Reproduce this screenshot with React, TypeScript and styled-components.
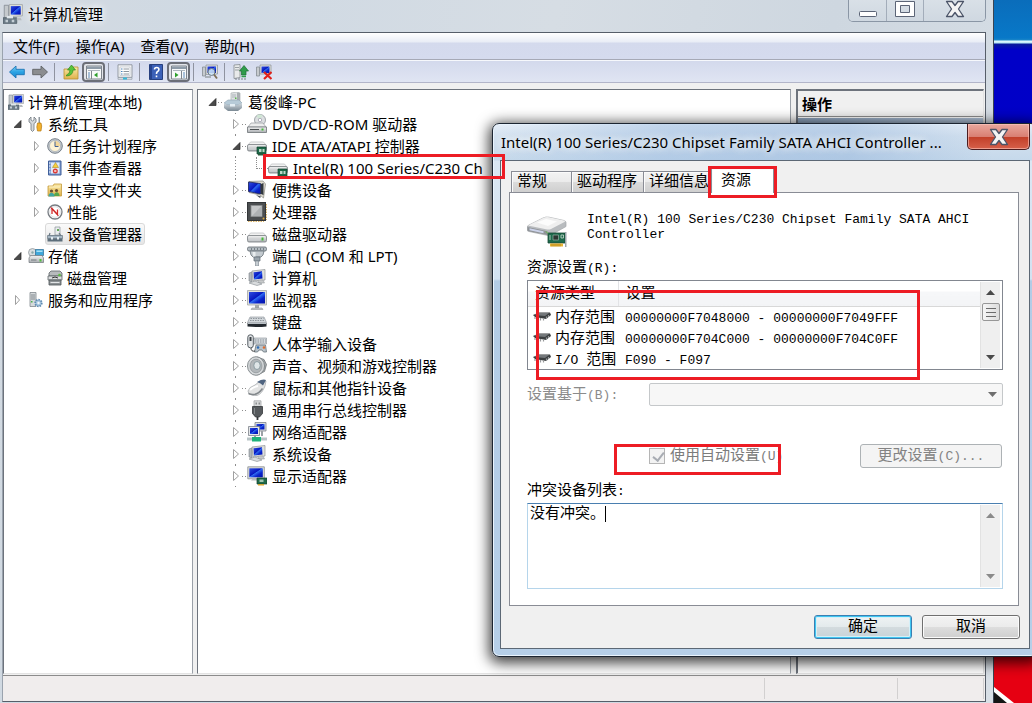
import React from "react";
import styled, { createGlobalStyle, css } from "styled-components";

const uiFont = `"Noto Sans", "Noto Sans CJK SC", sans-serif`;
const songFont = `"Liberation Mono", "Noto Sans CJK SC", monospace`;

const GlobalStyle = createGlobalStyle`
  * { box-sizing: border-box; }
  body { margin: 0; background: #0000c6; font-family: ${uiFont}; font-size: 15px; color: #000; }
  button, input, select, textarea { font: inherit; color: inherit; margin: 0; }
  ul { list-style: none; margin: 0; padding: 0; }
  svg { display: block; flex: none; }
`;

/* ---------- desktop ---------- */

const Desktop = styled.div`
  position: relative;
  overflow: hidden;
  min-height: 100vh;
  display: flex;
  background: linear-gradient(#0a6dbb 0, #0878c8 38px, #1a86c8 40px, #e8fbff 41px, #b5e6f5 43px, #0a1a9a 44px, #0000c8 50px, #0000c4 560px, #e60012 561px);
`;

const Wallpaper = styled.svg`
  position: absolute;
  right: 0;
  bottom: 0;
`;

/* ---------- main window ---------- */

const MainWindow = styled.section`
  flex: 1;
  min-width: 0;
  margin-right: 38px;
  padding: 0 7px 1px 2px;
  display: flex;
  flex-direction: column;
  position: relative;
  background: linear-gradient(100deg, #d3dae1 0, #cfd9e3 20%, #d6dde4 50%, #ced7e0 75%, #d8dfe6 100%);
  border-right: 1px solid #3b4452;
`;

const TitleBar = styled.header`
  height: 32px;
  display: flex;
  align-items: flex-start;
  gap: 5px;
  padding: 4px 0 0 1px;
`;

const WindowTitle = styled.h1`
  margin: 0;
  font-size: 15px;
  font-weight: 400;
  line-height: 20px;
  text-shadow: 0 0 6px #fff, 0 0 10px #fff;
`;

const CaptionButtons = styled.div`
  display: flex;
  margin: -4px 0 0 auto;
  height: 22px;
  border: 1px solid #8a96a5;
  border-top: 0;
  border-radius: 0 0 5px 5px;
  overflow: hidden;
`;

const CaptionButton = styled.button<{ $wide?: boolean }>`
  width: ${(p) => (p.$wide ? 62 : 37)}px;
  border: 0;
  border-left: 1px solid #a3adba;
  padding: 0;
  display: flex;
  align-items: flex-start;
  justify-content: center;
  background: linear-gradient(#d9e0e7, #cfd8e1);
  &:first-child { border-left: 0; }
`;

const Client = styled.div`
  flex: 1;
  display: flex;
  flex-direction: column;
  border: 1px solid #565e69;
  border-left-color: #9aa3ae;
  background: #f0f0f0;
`;

const MenuBar = styled.nav`
  height: 27px;
  display: flex;
  padding-left: 2px;
  border-bottom: 1px solid #a6a9b6;
  background: linear-gradient(#fff 0, #e9edf6 9px, #d4daed 10px, #d5dbee 100%);
`;

const MenuItem = styled.button`
  border: 0;
  background: none;
  padding: 0 8px;
  line-height: 24px;
`;

const Toolbar = styled.div`
  height: 23px;
  display: flex;
  align-items: center;
  padding-left: 2px;
  border-top: 1px solid #f6f8fc;
  border-bottom: 1px solid #b2b5c9;
  background: linear-gradient(#d3d9ec, #e0e5f3);
`;

const ToolButton = styled.button<{ $on?: boolean }>`
  width: 23px;
  height: 20px;
  padding: 0;
  display: flex;
  align-items: center;
  justify-content: center;
  border: 1px solid transparent;
  border-radius: 4px;
  background: none;
  ${(p) =>
    p.$on &&
    css`
      border: 2px solid #6c6f78;
      background: #e3e5ea;
    `}
`;

const ToolSeparator = styled.span`
  width: 1px;
  height: 18px;
  margin: 0 4px 0 3px;
  background: #8f93a0;
`;

const Panes = styled.div`
  flex: 1;
  display: flex;
  gap: 4px;
  padding: 6px 1px 1px 0;
`;

const Pane = styled.div<{ $width?: number }>`
  ${(p) => (p.$width ? `flex: 0 0 ${p.$width}px;` : "flex: 1;")}
  min-width: 0;
  padding-top: 1px;
  background: #fff;
  border: 1px solid #6d737c;
  border-bottom-color: #e3e3e3;
  border-right-color: #9aa0a8;
`;

const ActionsPane = styled(Pane)`
  padding: 0;
  margin-left: 1px;
  border: 2px solid #6d737c;
  border-right: 1px solid #e3e3e3;
  border-bottom: 1px solid #e3e3e3;
`;

const ActionsHead = styled.h2`
  margin: 0;
  height: 26px;
  padding-left: 4px;
  font-size: 15px;
  font-weight: 700;
  line-height: 26px;
  background: #f0f0f0;
  border-bottom: 1px solid #8e8e8e;
`;

const ActionsGroup = styled.div`
  height: 26px;
  margin-top: 1px;
  background: linear-gradient(90deg, #8fa5bf, #b4c6dc);
`;

const StatusBar = styled.footer`
  height: 26px;
  display: flex;
  justify-content: flex-end;
  padding-right: 1px;
  border-top: 1px solid #8c8c8c;
  background: #f0eded;
`;

const StatusCell = styled.span<{ $width: number }>`
  width: ${(p) => p.$width}px;
  margin: 2px 0;
  border-left: 1px solid #d2d0d0;
  &:last-child { border-right: 1px solid #d2d0d0; }
`;

/* ---------- trees ---------- */

const NavRow = styled.li<{ $level: number }>`
  height: 22px;
  display: flex;
  align-items: center;
  padding-left: ${(p) => [2, 8, 27][p.$level]}px;
`;

const NavTwisty = styled.span`
  width: 14px;
  padding-left: 2px;
`;

const NavBody = styled.span<{ $selected?: boolean }>`
  height: 22px;
  display: flex;
  align-items: center;
  gap: 4px;
  padding: 0 2px 0 1px;
  white-space: nowrap;
  line-height: 20px;
  border: 1px solid transparent;
  border-radius: 3px;
  ${(p) =>
    p.$selected &&
    css`
      border-color: #d9d9d9;
      background: linear-gradient(#fafafa, #e6e6e6);
    `}
`;

const dotsDown = css`
  background-image: repeating-linear-gradient(#8c8c8c 0 1px, transparent 1px 3px);
`;

const DeviceRow = styled.li<{ $root?: boolean }>`
  height: 22px;
  display: flex;
  align-items: center;
  padding-left: ${(p) => (p.$root ? 8 : 32)}px;
`;

const DeviceTwisty = styled.span<{ $line?: boolean }>`
  width: 12px;
  height: 22px;
  display: flex;
  align-items: center;
  padding: 4px 0 4px 2px;
  ${(p) => p.$line && dotsDown}
  background-size: 1px 100%;
  background-position: 5px 0;
  background-repeat: no-repeat;
  svg { background: #fff; height: 18px; }
`;

const Dots = styled.span`
  width: 5px;
  height: 1px;
  background: repeating-linear-gradient(90deg, #8c8c8c 0 1px, transparent 1px 3px);
`;

const Elbow = styled.span`
  width: 12px;
  height: 12px;
  margin: 0 0 10px 14px;
  border-left: 1px dotted #8c8c8c;
  border-bottom: 1px dotted #8c8c8c;
`;

const DeviceLabel = styled.span`
  margin-left: 5px;
  white-space: nowrap;
  line-height: 20px;
`;

/* ---------- dialog ---------- */

const Dialog = styled.section`
  position: absolute;
  top: 123px;
  left: 492px;
  right: -6px;
  padding: 0 7px 7px;
  border: 1px solid #1c2531;
  border-radius: 7px;
  background: linear-gradient(#e6eef7 0, #d3e1ef 12px, #c6d9eb 36px, #dbe7f3 37px, #d3e2f1 155px, #b3cce6 157px, #b6cfe8 100%);
  box-shadow: inset 0 0 0 1px #eaf4fd, 0 3px 14px 3px rgba(0, 0, 0, 0.75);
`;

const DialogTitleBar = styled.header`
  height: 36px;
  display: flex;
  justify-content: space-between;
  margin: 0 -5px 0 0;
  background: linear-gradient(90deg, transparent, rgba(160, 190, 225, 0.5) 30%, rgba(150, 182, 220, 0.5) 65%, transparent 92%);
`;

const DialogTitle = styled.h2`
  margin: 0;
  padding-left: 1px;
  font-size: 15px;
  font-weight: 400;
  line-height: 37px;
  white-space: nowrap;
  text-shadow: 0 0 8px #fff, 0 0 8px #fff;
`;

const DialogClose = styled.button`
  width: 63px;
  height: 26px;
  margin: 0 5px 0 0;
  padding: 0;
  display: flex;
  align-items: center;
  justify-content: center;
  border: 1px solid #4b1d20;
  border-top: 0;
  border-radius: 0 0 5px 5px;
  box-shadow: inset 0 0 0 1px rgba(255, 200, 190, 0.6);
  background: linear-gradient(#e9a89e 0, #d97f73 50%, #c13e28 51%, #d6604a 100%);
`;

const DialogBody = styled.div`
  padding: 7px 10px 9px 8px;
  border: 1px solid #5c6875;
  background: #f0f0f0;
  font-family: ${songFont};
`;

const TabStrip = styled.div`
  height: 25px;
  display: flex;
  align-items: flex-end;
  padding-left: 2px;
`;

const Tab = styled.button<{ $width: number; $active?: boolean }>`
  width: ${(p) => p.$width}px;
  height: 22px;
  padding: 1px 0 0 5px;
  text-align: left;
  white-space: nowrap;
  line-height: 20px;
  border: 1px solid #898c95;
  border-right-width: 0;
  background: linear-gradient(#f3f3f3 0, #ebebeb 50%, #dcdcdc 51%, #cfcfcf 100%);
  box-shadow: inset 1px 1px 0 #fbfbfb;
  ${(p) =>
    p.$active &&
    css`
      height: 25px;
      padding-left: 9px;
      line-height: 23px;
      border-right-width: 1px;
      border-bottom: 0;
      background: #fff;
      position: relative;
    `}
`;

const TabPage = styled.div`
  margin-top: -1px;
  padding: 19px 15px 16px 17px;
  border: 1px solid #898c95;
  background: #fff;
`;

const Latin = styled.span`
  font-size: 13px;
`;

const DeviceSummary = styled.div`
  height: 36px;
  display: flex;
  gap: 20px;
`;

const DeviceName = styled.p`
  margin: 0;
  font-size: 13px;
  line-height: 15px;
`;

const FieldLabel = styled.label<{ $space: number }>`
  display: block;
  margin: ${(p) => p.$space}px 0 1px;
  line-height: 20px;
`;

const ListBox = styled.div`
  height: 90px;
  display: flex;
  border: 1px solid #828790;
  background: #fff;
`;

const ListView = styled.div`
  flex: 1;
  overflow: hidden;
`;

const ListTable = styled.table`
  width: 100%;
  border-collapse: collapse;
  table-layout: fixed;
  th, td { padding: 0; text-align: left; font-weight: 400; white-space: nowrap; }
  th {
    height: 25px;
    padding: 4px 0 0 7px;
    line-height: 20px;
    background: linear-gradient(#fff 0, #fff 10px, #f6f7f9 11px, #f3f4f6 100%);
    border-bottom: 1px solid #d8d8d8;
  }
  th:first-child { width: 90px; border-right: 1px solid #e2e3e6; }
  td { height: 21px; line-height: 19px; padding: 2px 0 0 7px; }
  td:first-child { padding-left: 5px; }
`;

const TypeCell = styled.span`
  display: flex;
  align-items: center;
  gap: 4px;
`;

const ScrollTrack = styled.div`
  width: 20px;
  margin: 1px 2px 1px 0;
  display: flex;
  flex-direction: column;
  align-items: center;
  background: #efefef;
  border-left: 1px solid #e2e2e2;
`;

const ScrollArrow = styled.span`
  height: 21px;
  display: flex;
  align-items: center;
`;

const ScrollThumb = styled.span`
  width: 18px;
  height: 18px;
  display: flex;
  align-items: center;
  justify-content: center;
  border: 1px solid #979797;
  border-radius: 2px;
  background: linear-gradient(90deg, #f6f6f6, #dcdcdc);
`;

const ScrollSpace = styled.span`
  flex: 1;
`;

const BasedOnRow = styled.div`
  height: 23px;
  display: flex;
  margin-top: 13px;
  color: #8b8b8b;
  label { width: 122px; line-height: 26px; }
`;

const SelectWrap = styled.div`
  flex: 1;
  position: relative;
  svg { position: absolute; right: 6px; top: 9px; }
`;

const Select = styled.select`
  width: 100%;
  height: 23px;
  appearance: none;
  border: 1px solid #adb2b5;
  border-radius: 2px;
  background: #f4f4f4;
  display: block;
`;

const AutoRow = styled.div`
  display: flex;
  align-items: center;
  justify-content: space-between;
  height: 24px;
  margin-top: 38px;
  padding: 0 1px 0 122px;
`;

const CheckLabel = styled.label`
  display: flex;
  align-items: center;
  gap: 5px;
  white-space: nowrap;
  line-height: 20px;
  color: #7c7c7c;
  span { padding-top: 2px; }
`;

const CheckBox = styled.input`
  appearance: none;
  flex: none;
  width: 16px;
  height: 16px;
  border: 1px solid #b5b5b5;
  background: #f3f3f3;
  position: relative;
  &:checked::after {
    content: "";
    position: absolute;
    left: 5px;
    top: 1px;
    width: 5px;
    height: 9px;
    border: solid #a8acb3;
    border-width: 0 2px 2px 0;
    transform: rotate(38deg);
  }
`;

const ChangeButton = styled.button`
  width: 142px;
  height: 24px;
  padding: 2px 0 0;
  line-height: 20px;
  border: 1px solid #adb2b5;
  border-radius: 3px;
  background: #f4f4f4;
  color: #838383;
`;

const ConflictBox = styled.div`
  position: relative;
  height: 86px;
  display: flex;
  border: 1px solid #b5d5eb;
  border-top-color: #4a7fb0;
  background: #fff;
`;

const ConflictText = styled.textarea`
  flex: 1;
  padding: 1px 3px 0 2px;
  border: 0;
  outline: 0;
  resize: none;
  background: none;
  line-height: 19px;
`;

const Caret = styled.span`
  position: absolute;
  left: 77px;
  top: 2px;
  width: 1px;
  height: 16px;
  background: #000;
`;

const DialogButtons = styled.div`
  display: flex;
  justify-content: flex-end;
  gap: 10px;
  margin: 9px -1px 0 0;
`;

const PushButton = styled.button<{ $primary?: boolean }>`
  width: 98px;
  height: 24px;
  padding: 2px 0 0;
  line-height: 20px;
  border: 1px solid #707070;
  border-radius: 3px;
  box-shadow: inset 0 0 0 1px #fbfbfb;
  background: linear-gradient(#f3f3f3 0, #ebebeb 50%, #dddddd 51%, #cfcfcf 100%);
  ${(p) =>
    p.$primary &&
    css`
      border-color: #3c7fb1;
      box-shadow: inset 0 0 0 1px #3fc6f2, inset 0 0 0 2px #d5f0f8;
      background: linear-gradient(#eff3f4 0, #e3eaec 50%, #d3dbde 51%, #c8d3d8 100%);
    `}
`;

const Marker = styled.div<{ $x: number; $y: number; $w: number; $h: number }>`
  position: absolute;
  left: ${(p) => p.$x}px;
  top: ${(p) => p.$y}px;
  width: ${(p) => p.$w}px;
  height: ${(p) => p.$h}px;
  border: 3px solid #ed1c24;
  pointer-events: none;
`;

/* ---------- icons ---------- */

const Gradients = () => (
  <svg width="0" height="0" style={{ position: "absolute" }} aria-hidden="true">
    <defs>
      <linearGradient id="screen" x1="0" y1="0" x2="1" y2="1">
        <stop offset="0" stopColor="#2f4fe0" />
        <stop offset=".45" stopColor="#0718c0" />
        <stop offset=".5" stopColor="#2f6df0" />
        <stop offset=".7" stopColor="#0a24cc" />
        <stop offset="1" stopColor="#0414a8" />
      </linearGradient>
      <linearGradient id="metal" x1="0" y1="0" x2="0" y2="1">
        <stop offset="0" stopColor="#f4f4f4" />
        <stop offset="1" stopColor="#a9adb1" />
      </linearGradient>
      <linearGradient id="steel" x1="0" y1="0" x2="0" y2="1">
        <stop offset="0" stopColor="#cfd8de" />
        <stop offset="1" stopColor="#6c7c88" />
      </linearGradient>
      <linearGradient id="folder" x1="0" y1="0" x2="0" y2="1">
        <stop offset="0" stopColor="#fbe9a5" />
        <stop offset="1" stopColor="#dfb24c" />
      </linearGradient>
      <linearGradient id="blueArrow" x1="0" y1="0" x2="0" y2="1">
        <stop offset="0" stopColor="#7fd0f5" />
        <stop offset=".5" stopColor="#2ba3e4" />
        <stop offset="1" stopColor="#1f86cd" />
      </linearGradient>
    </defs>
  </svg>
);

const Svg = ({ s, children }: { s: number; children: React.ReactNode }) => (
  <svg width={s} height={s} viewBox={`0 0 ${s} ${s}`} aria-hidden="true">
    {children}
  </svg>
);

const ManageIcon = ({ size = 16 }: { size?: number }) => (
  <svg width={size} height={size} viewBox="0 0 16 16" aria-hidden="true">
    <path d="M1 1h3.500v10H1z" fill="#c4c9cc" stroke="#7d868d" strokeWidth=".6" />
    <path d="M5 .5h10.500v9l-10.500 .5z" fill="#e4e4dc" stroke="#989c9f" strokeWidth=".6" />
    <path d="M6.200 1.700h8v6.800h-8z" fill="url(#screen)" />
    <path d="M0 11h11v4.500H0z" fill="#6d7c87" stroke="#4b5963" strokeWidth=".6" />
    <path d="M3 9.500h5v2H3z" fill="#dfe6ea" />
    <path d="M2 12.500h2v2h-2zM7 12.500h2v2h-2z" fill="#c4ced5" />
    <path d="M11 11h3l1 2h-4z" fill="#b9bdc0" />
  </svg>
);

const ToolsIcon = () => (
  <Svg s={16}>
    <path d="M3 1v3l1.500 1L6 4V1l2 2v3L6 7.500V14l-1.500 1.500L3 14V7.500L1 6V3z" fill="#d5d9dc" stroke="#6f777e" strokeWidth=".8" />
    <path d="M10.500 1h1.500v6h-1.500z" fill="#8f979e" />
    <path d="M9.500 7h3.500l.7 3-.7 5h-3.500l-.7-4z" fill="#f3b12c" stroke="#b47a12" strokeWidth=".7" />
  </Svg>
);

const ClockIcon = () => (
  <Svg s={16}>
    <circle cx="8" cy="8" r="7.300" fill="#c7cdd3" stroke="#767f89" />
    <circle cx="8" cy="8" r="5.500" fill="#fdf3d6" stroke="#9aa3ab" strokeWidth=".6" />
    <path d="M8 8V3a5 5 0 0 1 5 5z" fill="#f2d69a" />
    <path d="M8 3.500V8.500h3.500" stroke="#3f5f93" fill="none" />
  </Svg>
);

const EventIcon = () => (
  <Svg s={16}>
    <path d="M1.500 1h12.500v14H1.500z" fill="#7b9ad0" stroke="#405f99" />
    <path d="M4 2.500h8.500v11H4z" fill="#dfe9f8" />
    <path d="M2 3h1.500M2 6h1.500M2 9h1.500M2 12h1.500" stroke="#f4f7fc" />
    <path d="M8.500 2.500l3 5h-6z" fill="#f9d03c" stroke="#9c7a10" strokeWidth=".5" />
    <circle cx="8.300" cy="11" r="2.500" fill="#db3a35" />
    <path d="M7.300 10l2 2m0-2l-2 2" stroke="#fff" strokeWidth=".8" />
  </Svg>
);

const SharedIcon = () => (
  <Svg s={16}>
    <path d="M1 4h5l1-2h7.500v12H1z" fill="url(#folder)" stroke="#c49a3b" strokeWidth=".8" />
    <path d="M2 5h11" stroke="#fdf3c8" />
    <circle cx="4.500" cy="9" r="1.600" fill="#6b5131" />
    <circle cx="9.500" cy="8.500" r="1.600" fill="#6b5131" />
    <path d="M1.500 14.500c0-5 6-5 6 0z" fill="#40a6a0" />
    <path d="M7 14c0-5 5.500-5 5.500 0z" fill="#57a64c" />
  </Svg>
);

const PerfIcon = () => (
  <Svg s={16}>
    <circle cx="8" cy="8" r="7" fill="#fff" stroke="#777c82" strokeWidth="1.300" />
    <circle cx="8" cy="8" r="5.300" fill="none" stroke="#c9ccd0" strokeWidth=".6" />
    <path d="M5 10V4.500l5.500 6V5.500" stroke="#d52b2b" strokeWidth="1.300" fill="none" />
    <path d="M3.500 3.500l8 8.500" stroke="#c11f1f" strokeWidth=".8" />
  </Svg>
);

const DeviceManagerIcon = () => (
  <Svg s={16}>
    <path d="M8 1h5v8H8z" fill="#e9ecee" stroke="#8b9299" strokeWidth=".7" />
    <path d="M10 3h2v2h-2z" fill="#65a95a" />
    <path d="M3 7l-1 3h12l-2-3" fill="none" stroke="#6b7985" strokeWidth="1.200" />
    <path d="M.5 9.500h15v3H.5z" fill="#a5b6c3" stroke="#5a6975" strokeWidth=".6" />
    <path d="M.5 12.500h15v3H.5z" fill="#5d6e7b" />
    <path d="M4 11h2v2.500H4zM10 11h2v2.500h-2z" fill="#e5ecf1" />
  </Svg>
);

const StorageIcon = () => (
  <Svg s={16}>
    <circle cx="4.500" cy="4.500" r="4" fill="#d9dde0" stroke="#878e94" strokeWidth=".7" />
    <circle cx="4.500" cy="4.500" r="1.200" fill="#8aa" />
    <path d="M7.500 1.500h8v6h-8z" fill="#3fa7da" stroke="#2a6a94" strokeWidth=".7" />
    <path d="M8.500 2.500h6v1.500h-6z" fill="#a9e0f5" />
    <path d="M1 10l1.500-2.500h11.500l1.500 2.500v4.500H1z" fill="url(#metal)" stroke="#70777d" strokeWidth=".7" />
    <path d="M11.500 11h2v2.500h-2z" fill="#4fbf3b" />
    <path d="M3 12h5.500" stroke="#70777d" />
  </Svg>
);

const DiskManagementIcon = () => (
  <Svg s={16}>
    <path d="M2 3l2-2h9l2 2v3H2z" fill="#b7babc" stroke="#5e6468" strokeWidth=".8" />
    <path d="M1 6h14v4H1z" fill="#d9dbdc" stroke="#5e6468" strokeWidth=".8" />
    <path d="M5 8q3-2 6 0" stroke="#333" fill="none" />
    <path d="M2 10h12v5H2z" fill="#8d9295" stroke="#4d5357" strokeWidth=".8" />
    <path d="M3.500 12.500h9" stroke="#e2e5e7" />
    <circle cx="12.500" cy="5" r="1.300" fill="#5abf3e" />
  </Svg>
);

const ServicesIcon = () => (
  <Svg s={16}>
    <path d="M2 .5h6v14H2z" fill="#d5d9db" stroke="#82898e" strokeWidth=".8" />
    <path d="M3 3h4M3 5h4M3 7h4" stroke="#6d757b" strokeWidth=".8" />
    <path d="M3 9h1.500v1.500H3z" fill="#49b24a" />
    <circle cx="10.500" cy="11" r="3.300" fill="#a8c7e0" stroke="#5f8bb2" strokeWidth="1.700" strokeDasharray="1.500 1" />
    <circle cx="10.500" cy="11" r="1.200" fill="#f4f8fb" />
  </Svg>
);

const ComputerIcon = () => (
  <Svg s={20}>
    <path d="M8 1l6-1 3 1v10l-9 1z" fill="#dfe2e3" stroke="#aab0b3" strokeWidth=".7" />
    <path d="M14 .5l3 .5v10h-3z" fill="#a9aeb1" />
    <path d="M9 3h4M9 5h4" stroke="#9aa2a7" strokeWidth=".7" />
    <path d="M12 5.500h1.500v1.500H12z" fill="#55b748" />
    <path d="M1 11l4-3h11l3 3-4 2H4z" fill="#b7cbd8" stroke="#8fa3b0" strokeWidth=".6" />
    <path d="M1 11v5l4 3h10l4-3v-5l-4 2H4z" fill="url(#steel)" opacity=".9" />
    <path d="M7 12h5v2.500H7z" fill="#e3edf3" />
  </Svg>
);

const OpticalIcon = () => (
  <Svg s={20}>
    <circle cx="13" cy="6" r="5.500" fill="#dcdfe1" stroke="#8e9498" strokeWidth=".8" />
    <path d="M13 6l-3.500-4a5.500 5.500 0 0 1 6-.8z" fill="#cfe6d4" />
    <circle cx="13" cy="6" r="1.700" fill="#fff" stroke="#889" strokeWidth=".6" />
    <path d="M1 13l3-4h12l3 4z" fill="#eceded" stroke="#969a9d" strokeWidth=".7" />
    <path d="M.5 13h19v5.500H.5z" fill="url(#metal)" stroke="#6d7276" strokeWidth=".8" />
    <path d="M3 15.500h9" stroke="#4c5154" />
    <path d="M14.500 14.500h2v2h-2z" fill="#46b83a" />
  </Svg>
);

const DriveShape = () => (
  <>
    <path d="M1 9l2.500-3h13L19 9z" fill="#f2f2f2" stroke="#b9bcbe" strokeWidth=".7" />
    <rect x=".5" y="8.500" width="19" height="6.500" rx="1.500" fill="url(#metal)" stroke="#84898c" strokeWidth=".9" />
    <path d="M2 13h11" stroke="#d4d7d9" />
  </>
);

const ControllerIcon = () => (
  <Svg s={20}>
    <DriveShape />
    <path d="M10 11h9v7h-9z" fill="#1f6b4a" stroke="#12442f" strokeWidth=".7" />
    <path d="M12 13h2.500v3H12zM15.500 13h2v3h-2z" fill="#bcd8c9" />
    <path d="M11 18h5v1.500h-5z" fill="#2c5a3c" />
  </Svg>
);

const DiskIcon = () => (
  <Svg s={20}>
    <g transform="translate(0 3)">
      <DriveShape />
      <path d="M14.500 10.500h2v3h-2z" fill="#46b83a" />
    </g>
  </Svg>
);

const PortableIcon = () => (
  <Svg s={20}>
    <path d="M2 1.500l14-.5 2.500 3-2 14-3.500-3-11-2.500z" fill="#e0ddd2" stroke="#8b8a82" strokeWidth=".7" />
    <path d="M1.500 2l12 1.500v10.500l-12-2.500z" fill="url(#screen)" stroke="#1a2359" strokeWidth=".8" />
    <path d="M14 4l2.500-1v12l-2.500-1z" fill="#32383e" />
    <path d="M9 15l5 1.500-1 1.500z" fill="#44494d" />
  </Svg>
);

const CpuIcon = () => (
  <Svg s={20}>
    <path d="M1 19h16M19 2v16" stroke="#cf9a34" strokeWidth="1.500" strokeDasharray="1.500 1" />
    <rect x=".5" y=".5" width="18" height="18" fill="#4b4e50" stroke="#333638" />
    <rect x="4" y="3.500" width="11" height="11" fill="#c5c7c8" stroke="#8b8e90" strokeWidth=".8" />
    <path d="M5 14l9.500-10v10z" fill="#aeb1b3" />
    <circle cx="16.500" cy="16.500" r="1" fill="#e0a83a" />
  </Svg>
);

const PortIcon = () => (
  <Svg s={20}>
    <rect x=".5" y="1" width="19" height="4" rx="1.500" fill="#b4bcc2" stroke="#5f686f" strokeWidth=".8" />
    <path d="M3 5h14l-1 4-2 2H6L4 9z" fill="#c3cacf" stroke="#68727a" strokeWidth=".8" />
    <path d="M5.500 6h3v5h-2z" fill="#e9edef" />
    <path d="M4 3h1m2 0h1m2 0h1m2 0h1m2 0h1" stroke="#3c444b" />
    <path d="M7 11h6v4H7z" fill="#99a4ac" stroke="#5f6a72" strokeWidth=".7" />
    <path d="M8.500 15h3v5h-3z" fill="#c6cdd2" stroke="#75808a" strokeWidth=".6" />
  </Svg>
);

const PcIcon = () => (
  <Svg s={20}>
    <path d="M2 5l3-1v10l-3-1z" fill="#b0b6ba" stroke="#7d858a" strokeWidth=".6" />
    <path d="M5 3l13-1.500v10.500l-12 1z" fill="#dfe0dc" stroke="#8f9396" strokeWidth=".7" />
    <path d="M6.500 4.300l8.500-1 .5 7.200-8.500 1z" fill="url(#screen)" />
    <path d="M11 12h5l1.500 3h-6z" fill="#c6c9ca" stroke="#8f9396" strokeWidth=".5" />
    <path d="M2 15l6-2 7 3-5 1.500z" fill="#d9dcde" stroke="#858b90" strokeWidth=".6" />
  </Svg>
);

const MonitorIcon = () => (
  <Svg s={20}>
    <path d="M.5 .5h19v14.500H.5z" fill="#dedfd9" stroke="#a4a7a8" strokeWidth=".8" />
    <path d="M2 2h16v11.500H2z" fill="url(#screen)" />
    <path d="M8 15h4v3H8z" fill="#a6aaad" />
    <path d="M5 18h10l1 1.500H4z" fill="#c8cbcc" stroke="#85898c" strokeWidth=".5" />
  </Svg>
);

const KeyboardIcon = () => (
  <Svg s={20}>
    <path d="M3 5h14l2.500 5.500H.5z" fill="#d3d8dc" stroke="#868d93" strokeWidth=".6" />
    <path d="M3.500 6.500h13M3 8.500h14" stroke="#8f969c" strokeDasharray="1.500 1" />
    <path d="M.5 11h19v3.500q-9.500 1-19 0z" fill="#23292f" />
    <path d="M1 11.500h18" stroke="#b9c0c6" />
  </Svg>
);

const HidIcon = () => (
  <Svg s={20}>
    <path d="M7 4h12.500v6H7z" fill="#d5dade" stroke="#868d93" strokeWidth=".6" />
    <path d="M8 6h11M8 8h11" stroke="#8b9299" strokeDasharray="1.500 1" />
    <rect x=".8" y=".8" width="5.500" height="13" rx="2.500" fill="#dfe2e4" stroke="#555d63" />
    <path d="M2.500 3h2v4h-2z" fill="#3c4348" />
    <path d="M9 11h9.500l1 7h-3l-1.500-2h-3l-1.500 2H7.500z" fill="#b9c3ca" stroke="#68737b" strokeWidth=".8" />
    <circle cx="11" cy="13.500" r="1.300" fill="#2f6cb4" />
    <circle cx="17" cy="13.500" r="1.300" fill="#dc6b2f" />
    <path d="M4 14q0 4 4 3" stroke="#444" fill="none" />
  </Svg>
);

const SpeakerIcon = () => (
  <Svg s={20}>
    <path d="M10 1l7 2.500 2.500 5-2 7-7.500 3.500z" fill="#a5a9ac" stroke="#71767a" strokeWidth=".8" />
    <ellipse cx="9" cy="10" rx="8.500" ry="9.300" fill="#d5d8da" stroke="#7d8387" strokeWidth=".9" />
    <ellipse cx="9" cy="10" rx="6" ry="6.800" fill="#b2b7ba" stroke="#8b9195" strokeWidth=".7" />
    <ellipse cx="10" cy="9.500" rx="3.200" ry="4" fill="#dfe6e8" stroke="#7c8f96" strokeWidth=".8" />
  </Svg>
);

const MouseIcon = () => (
  <Svg s={20}>
    <path d="M1 13q1-4 7-6l5-4 6 0-1 5q-3 8-8 9.500-4 .5-8-1.500z" fill="#e3e4e4" stroke="#a2a6a9" strokeWidth=".7" />
    <path d="M10 4q6-3.500 9-2l-3 5.500q-2-2.500-6-3.500z" fill="#4f6480" />
    <path d="M3 12q3-3 8-4" stroke="#fff" strokeWidth="2" fill="none" />
    <path d="M1.500 15.500q8 3.500 14-5" stroke="#83888c" strokeWidth="1.500" fill="none" />
  </Svg>
);

const UsbIcon = () => (
  <Svg s={20}>
    <path d="M7 .8h7v6H7z" fill="#d8dadb" stroke="#a3a6a8" strokeWidth=".8" />
    <path d="M8.500 2.500H10v2H8.500zM11.500 2.500H13v2h-1.500z" fill="#8b8e90" />
    <path d="M5.500 6.500h10v7l-3 3.500h-4l-3-3.500z" fill="#565a5d" stroke="#34373a" strokeWidth=".8" />
    <path d="M7.500 8v6" stroke="#84888b" />
    <path d="M10.500 17v3" stroke="#34373a" strokeWidth="1.800" />
  </Svg>
);

const NetworkIcon = () => (
  <Svg s={20}>
    <path d="M8 .5h11v8.500H8z" fill="#d9dde2" stroke="#7c8289" strokeWidth=".8" />
    <path d="M9.500 2h8v5.500h-8z" fill="url(#screen)" />
    <path d="M1.500 4.500h11v9h-11z" fill="#e4e7ea" stroke="#7c8289" strokeWidth=".8" />
    <path d="M3 6h8v6H3z" fill="url(#screen)" />
    <path d="M15 9v5M8 14v2" stroke="#9ba1a6" strokeWidth="2" />
    <path d="M0 15.500h20v3H0z" fill="#b9c4c6" />
    <path d="M5 15h9v4.500H5z" fill="#1fb27a" />
  </Svg>
);

const DisplayAdapterIcon = () => (
  <Svg s={20}>
    <path d="M.8 .8h16.500v12H.8z" fill="#dfe0da" stroke="#898d90" strokeWidth=".8" />
    <path d="M2.300 2.300h13.500v9H2.300z" fill="url(#screen)" />
    <path d="M4 14.500h7l-1-2H6z" fill="#b9bdbf" />
    <path d="M10 12h10v6H10z" fill="#1f6b4a" stroke="#12442f" strokeWidth=".7" />
    <path d="M12.500 13.500h4v2.500h-4z" fill="#9fc5b1" />
    <path d="M11 18h6v1.500h-6z" fill="#d4a531" />
  </Svg>
);

const AdapterLargeIcon = () => (
  <svg width="40" height="36" viewBox="0 0 40 36" aria-hidden="true">
    <path d="M0 15q0-1 2-2L16 6q3-1.500 6-.8L37 8.500q2 .7 2 2v4L24 23q-2 .8-4 .3L2 19.500q-2-.5-2-1.500z" fill="#b9bcbf" stroke="#a5a8ab" strokeWidth=".7" />
    <path d="M1 13.500L16 6q3-1.500 6-.8L37 8.500q2 .7 0 1.800L24 17q-2 1-5 .3z" fill="#efefef" />
    <path d="M10 10.500l9-3.500 11 2.500-9 4.500z" fill="#fcfcfc" />
    <path d="M.500 15l20 4.300V23L2 19.200q-1.500-.5-1.500-1.500z" fill="#8f9397" />
    <path d="M2.500 16.300l14 3v2l-14-3z" fill="#ccd3ea" />
    <path d="M21 21h17v10H21z" fill="#1e6a4c" stroke="#154833" strokeWidth=".8" />
    <path d="M26 23h5.500v5h-5.500z" fill="#2d3632" stroke="#86a698" strokeWidth=".8" />
    <path d="M23 23v5M34 23h2.500v3H34z" stroke="#c9dccf" strokeWidth=".8" fill="none" />
    <path d="M38 20h1.500v15H38z" fill="#9da6ac" />
    <path d="M23 31.500h13v3H23z" fill="#e8b434" />
    <path d="M25 31.500v3m2-3v3m2-3v3m2-3v3m2-3v3" stroke="#9a7211" strokeWidth=".6" />
    <path d="M19 19.500l2 2" stroke="#57c43b" />
  </svg>
);

const ChipIcon = () => (
  <svg width="18" height="14" viewBox="0 0 18 14" aria-hidden="true">
    <path d="M0 4l6-2.500h11l1 2.500-5 4-11-2z" fill="#3c3f41" />
    <path d="M1 4l5-2h10l-4 3z" fill="#74787b" />
    <path d="M2 6v2m2.500-1.500v2.500m3-2v2.500m3-2.500v2.500m3-4v2.500m2-4v2" stroke="#97999b" strokeWidth="1.200" />
  </svg>
);

const ToolArrow = ({ forward }: { forward?: boolean }) => (
  <Svg s={16}>
    {forward ? (
      <path d="M15.500 8L9 2v3.300H.7v5.400H9V14z" fill="#8b8d90" stroke="#5f6265" strokeWidth=".9" />
    ) : (
      <path d="M.5 8L7 2v3.300h8.300v5.400H7V14z" fill="url(#blueArrow)" stroke="#1c75b5" strokeWidth=".9" />
    )}
  </Svg>
);

const UpFolderIcon = () => (
  <Svg s={16}>
    <path d="M1 5h6l1.500-2H15v12H1z" fill="url(#folder)" stroke="#b98f34" strokeWidth=".8" />
    <path d="M3.500 11q3.500-1 3.500-5H4.500L8.500 1l4 5H10q0 5.500-6.500 6z" fill="#58c43b" stroke="#2f8a1d" strokeWidth=".7" />
  </Svg>
);

const PaneIcon = ({ right }: { right?: boolean }) => (
  <Svg s={16}>
    <path d="M.5 2h15v13H.5z" fill="#f8f9fa" stroke="#7f858d" />
    <path d="M1 2.500h14v2.500H1z" fill="#8e9ba8" />
    <path d="M2 6.500h12" stroke="#aeb6be" />
    <path d={right ? "M10.500 7v8" : "M5.500 7v8"} stroke="#7f858d" />
    <path d={right ? "M12 9h2m-2 2h2m-2 2h2" : "M2 9h2m-2 2h2m-2 2h2"} stroke="#5b88b8" />
    <path d={right ? "M4 8.500v5l3.500-2.500z" : "M11.500 8.500v5L8 11z"} fill="#2ea02c" />
  </Svg>
);

const PropertiesIcon = () => (
  <Svg s={16}>
    <path d="M1 .8h14v12.500H1z" fill="#f3f4f6" stroke="#8a919a" strokeWidth=".9" />
    <path d="M3 3h10v8.500H3z" fill="#fff" stroke="#b6bcc3" strokeWidth=".6" />
    <path d="M4 5h1.500M4 7.500h1.500M4 10h1.500" stroke="#4a81b9" />
    <path d="M6.500 5H12M6.500 7.500H12M6.500 10H12" stroke="#8d959d" />
    <path d="M1 13.500h14v1.800H1z" fill="#dfe5ea" stroke="#8a919a" strokeWidth=".6" />
    <path d="M6 13.500h4v2H6z" fill="#35b8d8" />
  </Svg>
);

const HelpIcon = () => (
  <Svg s={16}>
    <path d="M1.500 .5h13v15h-13z" fill="#3c61b8" stroke="#27407f" />
    <path d="M2 1h2v14H2z" fill="#27448f" />
    <path d="M6.500 5.500q0-2 2.200-2t2.200 2q0 1.300-1.300 2T8.500 10M8.500 11.500v1.700" stroke="#fff" strokeWidth="1.600" fill="none" />
  </Svg>
);

const ScanIcon = () => (
  <Svg s={16}>
    <path d="M.5 3h3v9h-3z" fill="#c7cbcf" stroke="#7d848a" strokeWidth=".7" />
    <path d="M4 1h11.500v9L4 10.500z" fill="#dfe0de" stroke="#8a8f93" strokeWidth=".7" />
    <path d="M5.500 2.500H14V9H5.500z" fill="url(#screen)" />
    <circle cx="9.500" cy="8" r="3.500" fill="#cfe6f6" fillOpacity=".85" stroke="#6f7d88" />
    <path d="M12 10.500l3 4" stroke="#7d6f55" strokeWidth="1.800" />
    <path d="M3 13h6" stroke="#9aa0a5" strokeWidth="1.500" />
  </Svg>
);

const UpdateIcon = () => (
  <Svg s={16}>
    <path d="M1 1l6-.5v13L1 14.500z" fill="#e8eaea" stroke="#868c90" strokeWidth=".8" />
    <path d="M2 3.500h4M2 6h4" stroke="#9aa0a4" />
    <path d="M8.500 11V7H6.500L11 1.500 15.500 7H13v4z" fill="#2f9c4b" stroke="#1e6e33" strokeWidth=".7" />
    <path d="M8.500 12.500H13" stroke="#2f9c4b" strokeWidth="1.500" />
    <path d="M2 15h11" stroke="#7b8185" strokeDasharray="2 1" />
  </Svg>
);

const UninstallIcon = () => (
  <Svg s={16}>
    <path d="M.5 3h3v9h-3z" fill="#c7cbcf" stroke="#7d848a" strokeWidth=".7" />
    <path d="M4 1h11v9L4 10z" fill="#dfe0de" stroke="#8a8f93" strokeWidth=".7" />
    <path d="M5.500 2.500h8V9h-8z" fill="url(#screen)" />
    <path d="M8 8l7.500 7M15.500 8L8 15" stroke="#e0201b" strokeWidth="2.200" />
  </Svg>
);

const CrossGlyph = () => (
  <svg width="20" height="18" viewBox="0 0 20 18" aria-hidden="true">
    <path
      d="M1.500 1.500h5.500l3 4 3-4h5.500L13.500 9l5 7.500H13l-3-4-3 4H1.500l5-7.500z"
      fill="#f4f4f4"
      stroke="#4b5468"
      strokeWidth="1.300"
      strokeLinejoin="round"
    />
  </svg>
);

const Triangle = ({ up, color = "#4a4a4a" }: { up?: boolean; color?: string }) => (
  <svg width="9" height="5" viewBox="0 0 9 5" aria-hidden="true">
    <path d={up ? "M0 5l4.500-5L9 5z" : "M0 0h9L4.500 5z"} fill={color} />
  </svg>
);

const Twisty = ({ open, size = 9 }: { open?: boolean; size?: number }) => (
  <svg width={size} height="14" viewBox={`0 0 ${size} 14`} aria-hidden="true">
    {open ? (
      <path d={`M${size - 1} 3.500v7h-7z`} fill="#4a4a4a" stroke="#262626" strokeWidth=".7" />
    ) : (
      <path d={`M1.500 2.500v9l${size - 4} -4.500z`} fill="#fff" stroke="#a0a0a0" />
    )}
  </svg>
);

/* ---------- data ---------- */

type NavItem = { label: string; level: number; icon: React.ReactNode; open?: boolean; leaf?: boolean; selected?: boolean };

const navItems: NavItem[] = [
  { label: "计算机管理(本地)", level: 0, icon: <ManageIcon />, leaf: true },
  { label: "系统工具", level: 1, icon: <ToolsIcon />, open: true },
  { label: "任务计划程序", level: 2, icon: <ClockIcon /> },
  { label: "事件查看器", level: 2, icon: <EventIcon /> },
  { label: "共享文件夹", level: 2, icon: <SharedIcon /> },
  { label: "性能", level: 2, icon: <PerfIcon /> },
  { label: "设备管理器", level: 2, icon: <DeviceManagerIcon />, leaf: true, selected: true },
  { label: "存储", level: 1, icon: <StorageIcon />, open: true },
  { label: "磁盘管理", level: 2, icon: <DiskManagementIcon />, leaf: true },
  { label: "服务和应用程序", level: 1, icon: <ServicesIcon /> },
];

type DeviceItem = { label: string; icon: React.ReactNode; kind?: "root" | "child"; open?: boolean };

const devices: DeviceItem[] = [
  { label: "葛俊峰-PC", icon: <ComputerIcon />, kind: "root", open: true },
  { label: "DVD/CD-ROM 驱动器", icon: <OpticalIcon /> },
  { label: "IDE ATA/ATAPI 控制器", icon: <ControllerIcon />, open: true },
  { label: "Intel(R) 100 Series/C230 Ch", icon: <ControllerIcon />, kind: "child" },
  { label: "便携设备", icon: <PortableIcon /> },
  { label: "处理器", icon: <CpuIcon /> },
  { label: "磁盘驱动器", icon: <DiskIcon /> },
  { label: "端口 (COM 和 LPT)", icon: <PortIcon /> },
  { label: "计算机", icon: <PcIcon /> },
  { label: "监视器", icon: <MonitorIcon /> },
  { label: "键盘", icon: <KeyboardIcon /> },
  { label: "人体学输入设备", icon: <HidIcon /> },
  { label: "声音、视频和游戏控制器", icon: <SpeakerIcon /> },
  { label: "鼠标和其他指针设备", icon: <MouseIcon /> },
  { label: "通用串行总线控制器", icon: <UsbIcon /> },
  { label: "网络适配器", icon: <NetworkIcon /> },
  { label: "系统设备", icon: <PcIcon /> },
  { label: "显示适配器", icon: <DisplayAdapterIcon /> },
];

const resources = [
  { type: <>内存范围</>, value: "00000000F7048000 - 00000000F7049FFF" },
  { type: <>内存范围</>, value: "00000000F704C000 - 00000000F704C0FF" },
  { type: <><Latin>I/O </Latin>范围</>, value: "F090 - F097" },
];

/* ---------- sections ---------- */

const NavTree = () => (
  <ul role="tree" aria-label="控制台树">
    {navItems.map((n) => (
      <NavRow key={n.label} $level={n.level} role="treeitem" aria-selected={!!n.selected}>
        {n.level > 0 && <NavTwisty>{!n.leaf && <Twisty open={n.open} size={8} />}</NavTwisty>}
        <NavBody $selected={n.selected}>
          {n.icon}
          {n.label}
        </NavBody>
      </NavRow>
    ))}
  </ul>
);

const DeviceTree = () => (
  <ul role="tree" aria-label="设备">
    {devices.map((d) => (
      <DeviceRow key={d.label} $root={d.kind === "root"} role="treeitem">
        <DeviceTwisty $line={d.kind !== "root"}>{d.kind !== "child" && <Twisty open={d.open} size={9} />}</DeviceTwisty>
        {d.kind === "child" ? <Elbow /> : <Dots />}
        {d.icon}
        <DeviceLabel>{d.label}</DeviceLabel>
      </DeviceRow>
    ))}
  </ul>
);

const ManagementWindow = () => (
  <MainWindow>
    <TitleBar>
      <ManageIcon size={20} />
      <WindowTitle>计算机管理</WindowTitle>
      <CaptionButtons>
        <CaptionButton aria-label="最小化">
          <svg width="20" height="20" viewBox="0 0 20 20">
            <rect x="1.500" y="11.500" width="17" height="5" rx="1" fill="#fff" stroke="#5c6577" />
          </svg>
        </CaptionButton>
        <CaptionButton aria-label="最大化">
          <svg width="20" height="20" viewBox="0 0 20 20">
            <path d="M.5 1.500h19v15H.5zM5.500 5.500v7h9v-7z" fill="#fff" fillRule="evenodd" stroke="#5c6577" />
          </svg>
        </CaptionButton>
        <CaptionButton $wide aria-label="关闭">
          <CrossGlyph />
        </CaptionButton>
      </CaptionButtons>
    </TitleBar>
    <Client>
      <MenuBar>
        {["文件(F)", "操作(A)", "查看(V)", "帮助(H)"].map((m) => (
          <MenuItem key={m}>{m}</MenuItem>
        ))}
      </MenuBar>
      <Toolbar>
        <ToolButton aria-label="后退"><ToolArrow /></ToolButton>
        <ToolButton aria-label="前进"><ToolArrow forward /></ToolButton>
        <ToolSeparator />
        <ToolButton aria-label="上一级"><UpFolderIcon /></ToolButton>
        <ToolButton $on aria-label="控制台树"><PaneIcon /></ToolButton>
        <ToolSeparator />
        <ToolButton aria-label="属性"><PropertiesIcon /></ToolButton>
        <ToolSeparator />
        <ToolButton aria-label="帮助"><HelpIcon /></ToolButton>
        <ToolButton $on aria-label="操作窗格"><PaneIcon right /></ToolButton>
        <ToolSeparator />
        <ToolButton aria-label="扫描硬件改动"><ScanIcon /></ToolButton>
        <ToolSeparator />
        <ToolButton aria-label="更新驱动程序"><UpdateIcon /></ToolButton>
        <ToolButton aria-label="卸载"><UninstallIcon /></ToolButton>
      </Toolbar>
      <Panes>
        <Pane $width={190}><NavTree /></Pane>
        <Pane><DeviceTree /></Pane>
        <ActionsPane $width={188}>
          <ActionsHead>操作</ActionsHead>
          <ActionsGroup />
        </ActionsPane>
      </Panes>
      <StatusBar>
        <StatusCell $width={133} />
        <StatusCell $width={87} />
      </StatusBar>
    </Client>
  </MainWindow>
);

const PropertiesDialog = () => (
  <Dialog role="dialog" aria-labelledby="dialog-title">
    <DialogTitleBar>
      <DialogTitle id="dialog-title">Intel(R) 100 Series/C230 Chipset Family SATA AHCI Controller ...</DialogTitle>
      <DialogClose aria-label="关闭"><CrossGlyph /></DialogClose>
    </DialogTitleBar>
    <DialogBody>
      <TabStrip role="tablist">
        <Tab role="tab" $width={60}>常规</Tab>
        <Tab role="tab" $width={72}>驱动程序</Tab>
        <Tab role="tab" $width={68}>详细信息</Tab>
        <Tab role="tab" $width={63} $active aria-selected="true">资源</Tab>
      </TabStrip>
      <TabPage role="tabpanel">
        <DeviceSummary>
          <AdapterLargeIcon />
          <DeviceName>Intel(R) 100 Series/C230 Chipset Family SATA AHCI<br />Controller</DeviceName>
        </DeviceSummary>
        <FieldLabel as="div" id="res-label" $space={11}>资源设置<Latin>(R):</Latin></FieldLabel>
        <ListBox>
          <ListView>
            <ListTable aria-labelledby="res-label">
              <thead>
                <tr><th>资源类型</th><th>设置</th></tr>
              </thead>
              <tbody>
                {resources.map((r) => (
                  <tr key={r.value}>
                    <td><TypeCell><ChipIcon /><span>{r.type}</span></TypeCell></td>
                    <td><Latin>{r.value}</Latin></td>
                  </tr>
                ))}
              </tbody>
            </ListTable>
          </ListView>
          <ScrollTrack aria-hidden="true">
            <ScrollArrow><Triangle up /></ScrollArrow>
            <ScrollThumb>
              <svg width="10" height="10" viewBox="0 0 10 10">
                <path d="M0 1.500h10M0 5.500h10M0 9.500h10" stroke="#6b6b6b" />
              </svg>
            </ScrollThumb>
            <ScrollSpace />
            <ScrollArrow><Triangle /></ScrollArrow>
          </ScrollTrack>
        </ListBox>
        <BasedOnRow>
          <label htmlFor="based-on">设置基于<Latin>(B):</Latin></label>
          <SelectWrap>
            <Select id="based-on" disabled />
            <Triangle color="#6f6f6f" />
          </SelectWrap>
        </BasedOnRow>
        <AutoRow>
          <CheckLabel>
            <CheckBox type="checkbox" defaultChecked disabled />
            <span>使用自动设置<Latin>(U)</Latin></span>
          </CheckLabel>
          <ChangeButton disabled>更改设置<Latin>(C)...</Latin></ChangeButton>
        </AutoRow>
        <FieldLabel htmlFor="conflicts" $space={14}>冲突设备列表<Latin>:</Latin></FieldLabel>
        <ConflictBox>
          <ConflictText id="conflicts" defaultValue="没有冲突。" readOnly />
          <Caret />
          <ScrollTrack aria-hidden="true">
            <ScrollArrow><Triangle up color="#8a8a8a" /></ScrollArrow>
            <ScrollSpace />
            <ScrollArrow><Triangle color="#8a8a8a" /></ScrollArrow>
          </ScrollTrack>
        </ConflictBox>
      </TabPage>
      <DialogButtons>
        <PushButton $primary>确定</PushButton>
        <PushButton>取消</PushButton>
      </DialogButtons>
    </DialogBody>
    <Marker $x={215} $y={42} $w={69} $h={32} />
    <Marker $x={43} $y={166} $w={384} $h={90} />
    <Marker $x={121} $y={320} $w={167} $h={31} />
  </Dialog>
);

export default function App() {
  return (
    <>
      <GlobalStyle />
      <Gradients />
      <Desktop>
        <Wallpaper width="38" height="60" viewBox="0 0 38 60" aria-hidden="true">
          <path d="M0 44l20 16H0z" fill="#fff" />
          <path d="M0 49l13 11H0z" fill="#151515" />
        </Wallpaper>
        <ManagementWindow />
        <PropertiesDialog />
        <Marker $x={263} $y={154} $w={242} $h={25} />
      </Desktop>
    </>
  );
}
